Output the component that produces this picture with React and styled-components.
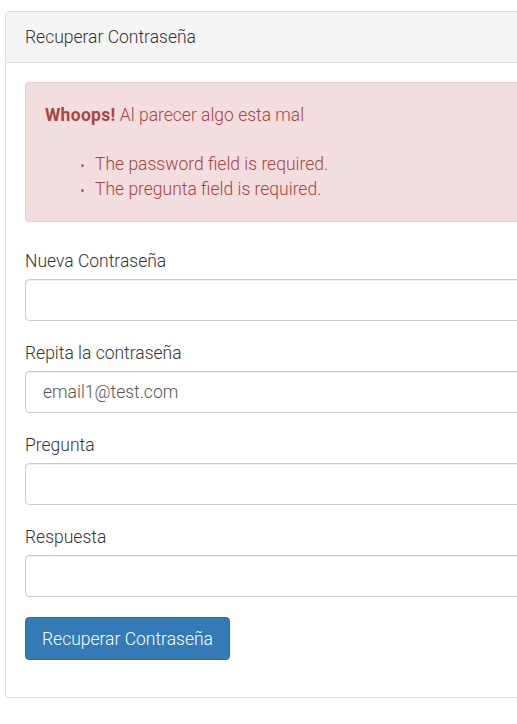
import React from "react";
import styled, { createGlobalStyle } from "styled-components";

const GlobalStyle = createGlobalStyle`
  html, body {
    margin: 0;
    padding: 0;
    background: #fff;
    overflow: hidden;
  }
  body {
    font-family: Roboto, "Liberation Sans", sans-serif;
    font-weight: 300;
    font-size: 17.5px;
    line-height: 1.45;
    color: #333;
  }
  * {
    box-sizing: border-box;
  }
`;

const Page = styled.div`
  padding: 11px 0 0 5px;
`;

const Panel = styled.div`
  width: 720px;
  background: #fff;
  border: 1px solid #ddd;
  border-radius: 4px;
  box-shadow: 0 1px 1px rgba(0, 0, 0, 0.05);
`;

const PanelHeading = styled.div`
  padding: 12px 19px 12px;
  background: #f5f5f5;
  border-bottom: 1px solid #ddd;
  border-radius: 3px 3px 0 0;
  line-height: 26px;
  color: #333;
`;

const PanelBody = styled.div`
  padding: 19px 19px 17px;
`;

const Alert = styled.div`
  padding: 20px 19px;
  margin-bottom: 27px;
  background: #f2dede;
  border: 1px solid #ebccd1;
  border-radius: 4px;
  color: #a94442;
  line-height: 24.5px;

  strong {
    font-weight: 700;
    letter-spacing: 0.3px;
  }
`;

const ErrorList = styled.ul`
  margin: 0;
  padding-left: 50px;
  list-style: none;

  li {
    position: relative;
  }

  li::before {
    content: "";
    position: absolute;
    left: -14px;
    top: 12px;
    width: 3px;
    height: 3px;
    border-radius: 50%;
    background: #b06060;
  }
`;

const FormGroup = styled.div`
  margin-bottom: 20px;
`;

const Label = styled.label`
  display: block;
  margin-bottom: 5px;
  line-height: 25px;
  color: #333;
`;

const Input = styled.input`
  display: block;
  width: 100%;
  height: 42px;
  padding: 6px 17px;
  font-family: inherit;
  font-weight: 300;
  font-size: 17.5px;
  color: #555;
  background: #fff;
  border: 1px solid #ccc;
  border-radius: 4px;
  box-shadow: inset 0 1px 1px rgba(0, 0, 0, 0.075);
  outline: none;
`;

const Button = styled.button`
  display: inline-block;
  height: 43px;
  padding: 0 16px;
  font-family: inherit;
  font-weight: 300;
  font-size: 17.5px;
  color: #fff;
  background: #337ab7;
  border: 1px solid #2e6da4;
  border-radius: 4px;
  cursor: pointer;
`;

const fields = [
  { label: "Nueva Contraseña", type: "password", value: "" },
  { label: "Repita la contraseña", type: "text", value: "email1@test.com" },
  { label: "Pregunta", type: "text", value: "" },
  { label: "Respuesta", type: "text", value: "" },
];

const App = () => {
  return (
    <>
      <GlobalStyle />
      <Page>
        <Panel>
          <PanelHeading>Recuperar Contraseña</PanelHeading>
          <PanelBody>
            <Alert>
              <strong>Whoops!</strong> Al parecer algo esta mal
              <br />
              <br />
              <ErrorList>
                <li>The password field is required.</li>
                <li>The pregunta field is required.</li>
              </ErrorList>
            </Alert>
            <form onSubmit={(e) => e.preventDefault()}>
              {fields.map((f) => (
                <FormGroup key={f.label}>
                  <Label>{f.label}</Label>
                  <Input type={f.type} defaultValue={f.value} />
                </FormGroup>
              ))}
              <FormGroup>
                <Button type="submit">Recuperar Contraseña</Button>
              </FormGroup>
            </form>
          </PanelBody>
        </Panel>
      </Page>
    </>
  );
};

export default App;
